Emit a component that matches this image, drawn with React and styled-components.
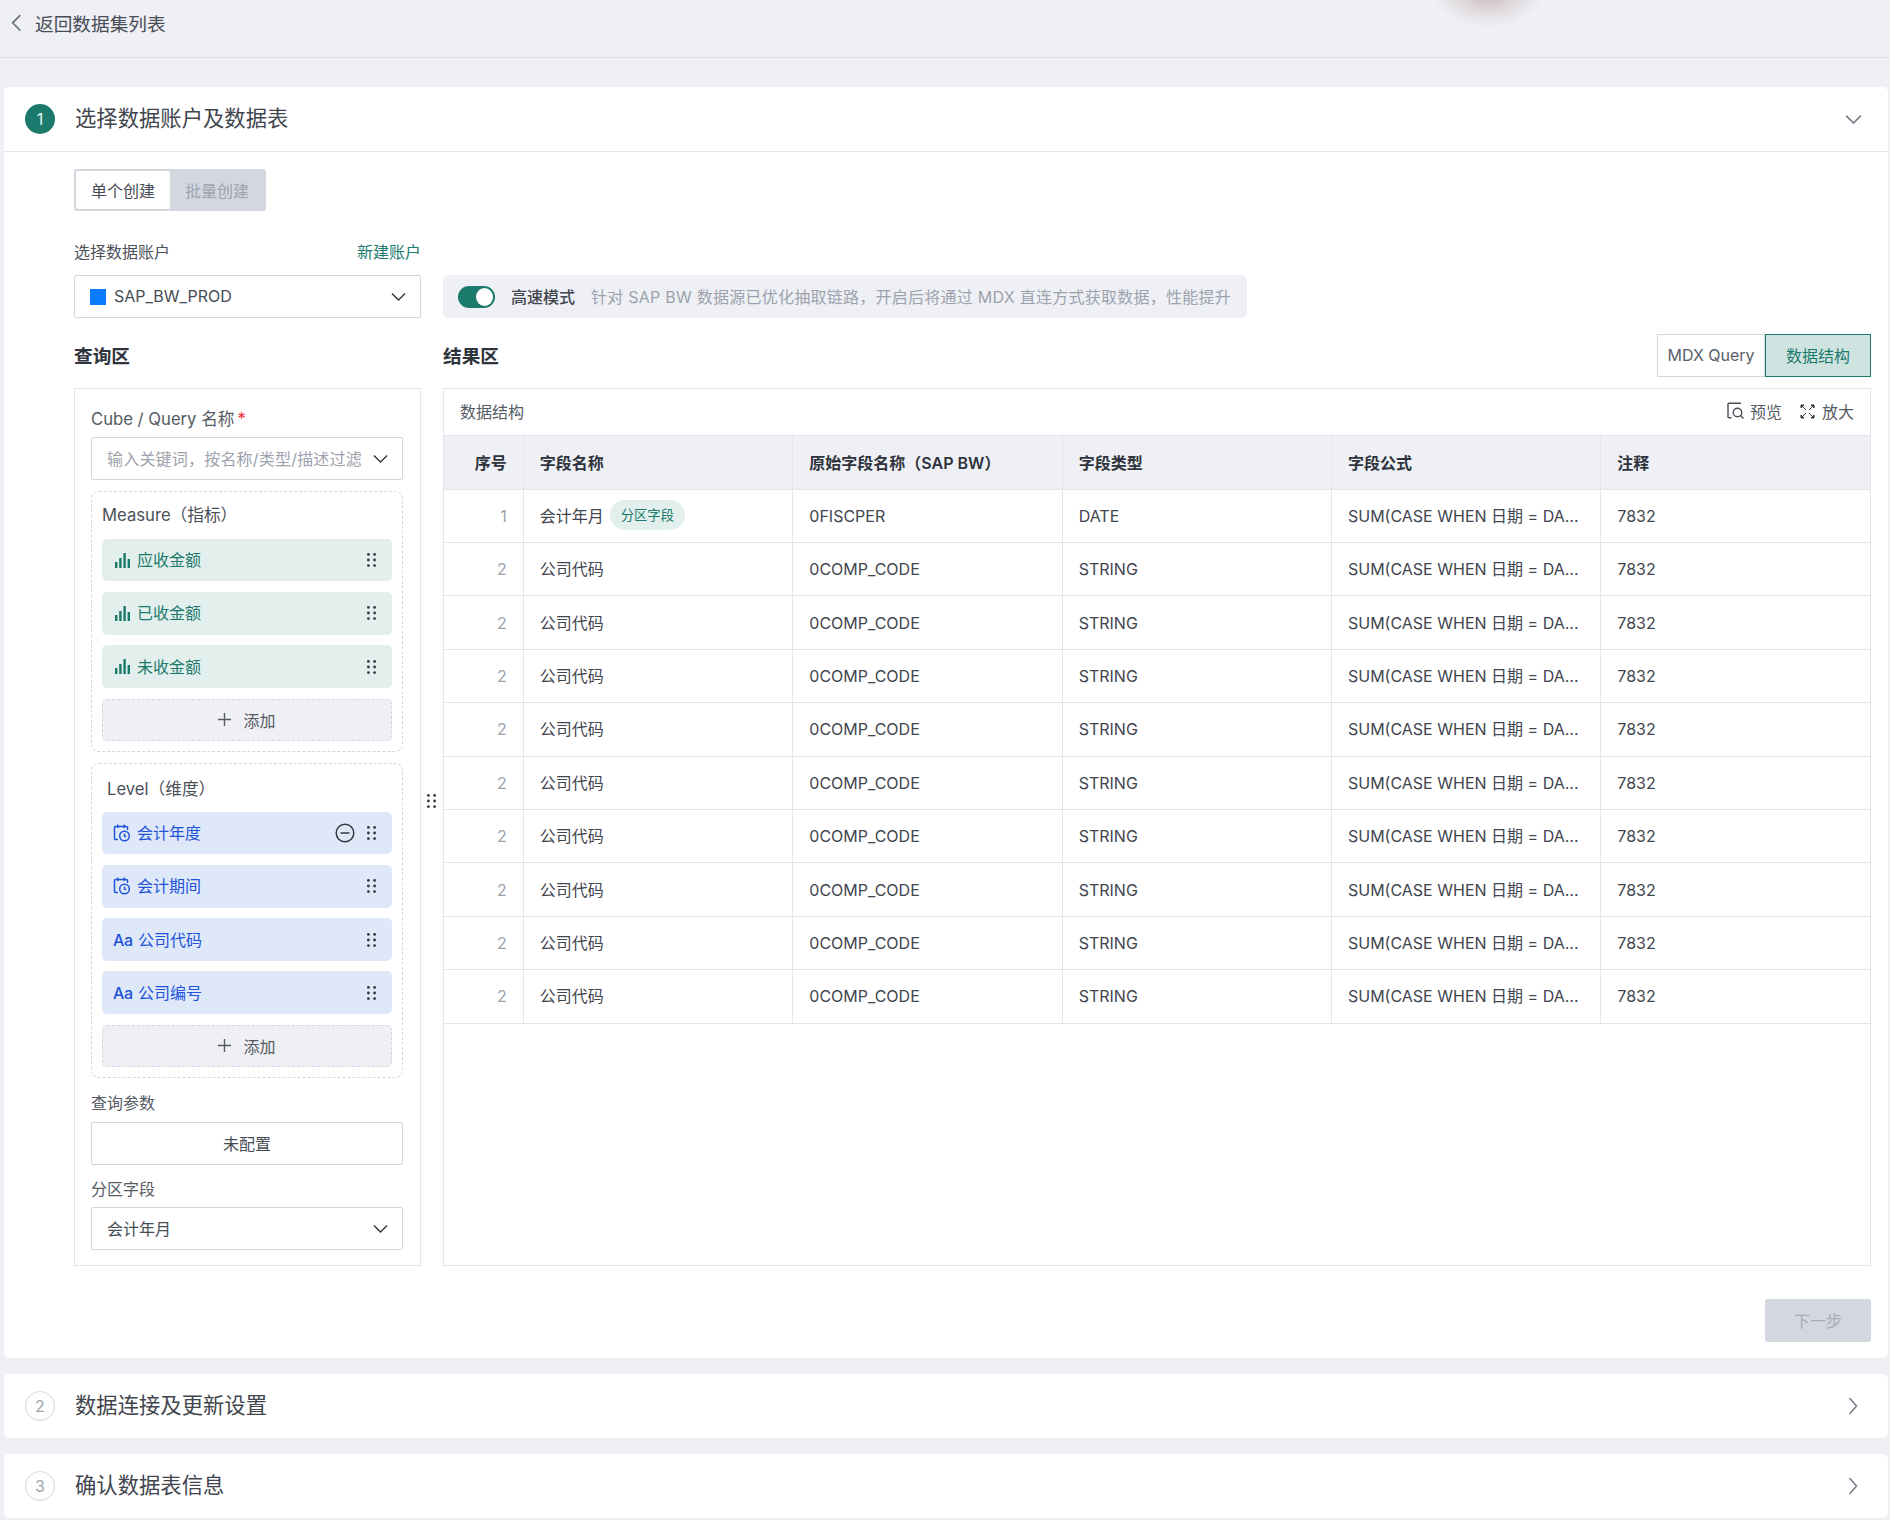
import React from "react";
import styled, { createGlobalStyle } from "styled-components";

const GREEN = "#1b7a6c";
const BLUE = "#2153d9";
const LINE = "#e3e5ec";
const FIELD = "#d3d7e0";
const GREY = "#9da2ad";
const TEXT = "#3a3f49";

const GlobalStyle = createGlobalStyle`
  html, body { margin: 0; padding: 0; background: #eff0f5; }
  body { font-family: Inter, "Noto Sans CJK SC", sans-serif; color: ${TEXT}; }
  * { box-sizing: border-box; }
`;

const Page = styled.div`
  width: 1890px;
  height: 1520px;
  overflow: hidden;
  position: relative;
`;
const Smudge = styled.div`
  position: absolute;
  left: 1430px;
  top: -50px;
  width: 116px;
  height: 78px;
  border-radius: 50%;
  background: radial-gradient(closest-side, rgba(186, 160, 155, 0.75), rgba(200, 185, 185, 0.3) 65%, rgba(239, 240, 245, 0));
`;
const TopBar = styled.div`
  height: 58px;
  padding: 0 0 12px 11px;
  display: flex;
  align-items: center;
  gap: 13px;
  font-size: 18.67px;
  color: #474c55;
  border-bottom: 1.33px solid #dcdee6;
`;
const Steps = styled.div`
  padding: 29px 2px 0 4px;
  display: flex;
  flex-direction: column;
  gap: 16px;
`;
const Card = styled.section`
  background: #fff;
  border-radius: 5px;
`;
const CardHead = styled.div`
  height: ${props => (props.$open ? "65.33px" : "64px")};
  padding: 0 ${props => (props.$open ? "26px" : "30px")} 0 21px;
  display: flex;
  align-items: center;
  border-bottom: ${props => (props.$open ? `1.33px solid ${LINE}` : "none")};
`;
const StepNo = styled.div`
  width: 30px;
  height: 30px;
  border-radius: 50%;
  display: flex;
  align-items: center;
  justify-content: center;
  font-size: 16px;
  background: ${props => (props.$active ? GREEN : "#fff")};
  color: ${props => (props.$active ? "#e8f3f1" : GREY)};
  border: ${props => (props.$active ? "none" : `1.33px solid ${FIELD}`)};
`;
const CardTitle = styled.h2`
  margin: 0 0 2px 20px;
  flex: 1;
  font-size: 21.33px;
  line-height: 32px;
  font-weight: 400;
  color: #41454e;
`;
const CardBody = styled.div`
  padding: 17px 17px 16px 70px;
`;
const Segment = styled.div`
  width: 192px;
  height: 42px;
  padding: 2px;
  display: flex;
  background: ${FIELD};
  border-radius: 3px;
`;
const SegmentItem = styled.div`
  width: 94px;
  padding-bottom: 1px;
  display: flex;
  align-items: center;
  justify-content: center;
  font-size: 16px;
  border-radius: 2px;
  background: ${props => (props.$active ? "#fff" : "transparent")};
  color: ${props => (props.$active ? "#474c55" : GREY)};
`;
const AccountGrid = styled.div`
  margin-top: 29px;
  display: grid;
  grid-template-columns: 347px 1fr;
  column-gap: 22px;
  row-gap: 11px;
  align-items: center;
`;
const LabelRow = styled.div`
  display: flex;
  justify-content: space-between;
  font-size: 16px;
  line-height: 24px;
  color: #4b5059;
`;
const NewLink = styled.a`
  color: ${GREEN};
`;
const Select = styled.div`
  height: 42.67px;
  padding: 0 14.5px 0 15px;
  display: flex;
  align-items: center;
  gap: 8px;
  border: 1.33px solid ${FIELD};
  border-radius: 2px;
  background: #fff;
  font-size: 16px;
  color: ${props => (props.$muted ? GREY : "#474c55")};
`;
const SelectText = styled.span`
  flex: 1;
  padding-bottom: 1px;
  white-space: nowrap;
  overflow: hidden;
  letter-spacing: ${props => (props.$muted ? "0.2px" : "0")};
`;
const Swatch = styled.i`
  width: 16px;
  height: 16px;
  background: #0b7cff;
`;
const Banner = styled.div`
  width: 804px;
  height: 42.67px;
  padding-left: 15px;
  display: flex;
  align-items: center;
  background: #eff0f5;
  border-radius: 5px;
  font-size: 16px;
`;
const Switch = styled.div`
  width: 37px;
  height: 22px;
  padding: 2px 2px 2px 0;
  display: flex;
  justify-content: flex-end;
  border-radius: 11px;
  background: ${GREEN};
  &::after {
    content: "";
    width: 17px;
    height: 18px;
    border-radius: 50%;
    background: #fff;
  }
`;
const BannerName = styled.span`
  margin-left: 16px;
  padding-bottom: 2px;
  font-weight: 500;
  color: #41454e;
`;
const BannerHint = styled.span`
  margin-left: 16px;
  padding-bottom: 2px;
  color: ${GREY};
  white-space: nowrap;
  letter-spacing: 0.25px;
`;
const Workspace = styled.div`
  margin-top: 16px;
  display: grid;
  grid-template-columns: 347px 22px 1fr;
`;
const Column = styled.div`
  display: flex;
  flex-direction: column;
`;
const Gutter = styled.div`
  padding: 458px 0 0 6px;
  color: #33383f;
`;
const ColumnHead = styled.div`
  height: 43px;
  margin-bottom: 11px;
  display: flex;
  align-items: center;
  justify-content: space-between;
`;
const Heading = styled.h3`
  margin: 0 0 2px;
  font-size: 18.67px;
  font-weight: 700;
  color: #2e333c;
`;
const ViewSwitch = styled.div`
  display: flex;
  height: 43px;
`;
const ViewTab = styled.div`
  width: ${props => (props.$active ? "106px" : "108px")};
  display: flex;
  align-items: center;
  justify-content: center;
  font-size: 16px;
  color: ${props => (props.$active ? GREEN : "#5b606a")};
  background: ${props => (props.$active ? "#cfe4e0" : "#fff")};
  border: ${props => (props.$active ? `1.33px solid ${GREEN}` : `1.33px solid ${FIELD}`)};
`;
const QueryPanel = styled.div`
  height: 878px;
  padding: 18px 17px 0 16px;
  border: 1.33px solid ${LINE};
`;
const FieldLabel = styled.div`
  font-size: ${props => props.$size || "16px"};
  line-height: 24px;
  margin: ${props => props.$margin || "0 0 6px"};
  color: #565b64;
`;
const Star = styled.span`
  margin-left: 3px;
  color: #f0353b;
`;
const Group = styled.div`
  margin-top: 11px;
  padding: 11px 10px 10px;
  display: flex;
  flex-direction: column;
  gap: 10.67px;
  border: 1.33px dashed ${FIELD};
  border-radius: 8px;
`;
const GroupTitle = styled.div`
  padding-left: ${props => props.$indent || 0};
  margin-top: ${props => props.$drop || 0};
  margin-bottom: ${props => (props.$drop ? "-0.5px" : "1.5px")};
  font-size: 16.67px;
  line-height: 24px;
  color: #4b5059;
`;
const Item = styled.div`
  height: 42.67px;
  padding: 0 16.5px 0 ${props => props.$pad || "13px"};
  display: flex;
  align-items: center;
  gap: 6px;
  border-radius: 5px;
  font-size: 16px;
  background: ${props => (props.$kind === "measure" ? "#e2efed" : "#dfe8f9")};
  color: ${props => (props.$kind === "measure" ? GREEN : BLUE)};
`;
const ItemName = styled.span`
  flex: 1;
  padding-bottom: 2px;
`;
const AaGlyph = styled.span`
  width: 19px;
  font-size: 16px;
  font-weight: 500;
  letter-spacing: -0.3px;
`;
const ItemTail = styled.span`
  display: flex;
  align-items: center;
  gap: 12px;
  color: #33383f;
`;
const AddButton = styled.div`
  height: 42.67px;
  padding-bottom: 1px;
  display: flex;
  align-items: center;
  justify-content: center;
  gap: 12px;
  border: 1.33px dashed ${FIELD};
  border-radius: 5px;
  background: #eff0f5;
  font-size: 16px;
  color: #555a63;
`;
const PlainButton = styled.div`
  height: 42.67px;
  padding-bottom: 1px;
  display: flex;
  align-items: center;
  justify-content: center;
  border: 1.33px solid ${FIELD};
  border-radius: 2px;
  font-size: 16px;
  color: #474c55;
`;
const ResultPanel = styled.div`
  height: 878px;
  border: 1.33px solid ${LINE};
`;
const ResultBar = styled.div`
  height: 46px;
  padding: 0 16px 1px;
  display: flex;
  align-items: center;
  justify-content: space-between;
  font-size: 16px;
  color: #565b64;
`;
const Actions = styled.div`
  display: flex;
  gap: 18px;
`;
const Action = styled.span`
  display: flex;
  align-items: center;
  gap: ${props => props.$gap || "7px"};
  color: #565b64;
`;
const TableRow = styled.div`
  display: grid;
  grid-template-columns: 79.67px 269.67px 269.33px 269.33px 269.33px 1fr;
  height: ${props => (props.$head ? "54.67px" : "53.4px")};
  background: ${props => (props.$head ? "#eff0f5" : "#fff")};
  border-bottom: 1.33px solid ${LINE};
  ${props => props.$head && `border-top: 1.33px solid ${LINE};`}
  font-weight: ${props => (props.$head ? 600 : 400)};
  color: ${props => (props.$head ? "#2e333c" : "#41454e")};
`;
const Cell = styled.div`
  padding: 0 16px ${props => (props.$cjk ? "2px" : "0")};
  display: flex;
  align-items: center;
  font-size: 16px;
  white-space: nowrap;
  overflow: hidden;
  justify-content: ${props => (props.$right ? "flex-end" : "flex-start")};
  color: ${props => (props.$muted ? GREY : "inherit")};
  border-right: ${props => (props.$last ? "none" : `1.33px solid ${LINE}`)};
`;
const Badge = styled.span`
  margin-left: 6px;
  height: 30px;
  padding: 0 11px;
  display: inline-flex;
  align-items: center;
  border-radius: 15px;
  background: #e2efed;
  color: ${GREEN};
  font-size: 13.33px;
  font-weight: 400;
`;
const Footer = styled.div`
  margin-top: 33px;
  display: flex;
  justify-content: flex-end;
`;
const NextButton = styled.div`
  width: 106px;
  height: 43px;
  padding-bottom: 1px;
  display: flex;
  align-items: center;
  justify-content: center;
  border-radius: 2px;
  background: ${FIELD};
  color: #a7abb5;
  font-size: 16px;
`;

const Chevron = ({ dir = "down", w = 15, color = "#33383f" }) => {
  const paths = {
    down: "M1 1.5l7 7 7-7",
    right: "M1.5 1l7 8-7 8",
    left: "M8.5 1l-7 7 7 7",
  };
  const box = { down: "0 0 16 10", right: "0 0 10 18", left: "0 0 10 16" };
  return (
    <svg width={w} viewBox={box[dir]} fill="none" stroke={color} strokeWidth="1.5" style={{ flexShrink: 0 }}>
      <path d={paths[dir]} />
    </svg>
  );
};

const Grip = () => (
  <svg width="9" height="14" viewBox="0 0 9 14" fill="currentColor">
    {[1.4, 7, 12.6].map(y =>
      [1.4, 7.6].map(x => <circle key={`${x}-${y}`} cx={x} cy={y} r="1.4" />)
    )}
  </svg>
);

const Bars = () => (
  <svg width="16" height="15" viewBox="0 0 16 15" fill={GREEN}>
    <rect x="0" y="9" width="2.4" height="6" />
    <rect x="4.2" y="5" width="2.4" height="10" />
    <rect x="8.4" y="0" width="2.4" height="15" />
    <rect x="12.6" y="6" width="2.4" height="9" />
  </svg>
);

const CalendarClock = () => (
  <svg width="18" height="18" viewBox="0 0 18 18" fill="none" stroke={BLUE} strokeWidth="1.5">
    <path d="M5 15.5H2.5a1 1 0 0 1-1-1V3.5a1 1 0 0 1 1-1h11a1 1 0 0 1 1 1V6" />
    <path d="M4.8 0.5v3.5M11.2 0.5v3.5" />
    <circle cx="11.5" cy="12" r="4.8" />
    <path d="M11.5 9.8V12l1.6 .8" />
  </svg>
);

const MinusCircle = () => (
  <svg width="20" height="20" viewBox="0 0 20 20" fill="none" stroke="currentColor" strokeWidth="1.5">
    <circle cx="10" cy="10" r="8.8" />
    <path d="M5.5 10h9" />
  </svg>
);

const Plus = () => (
  <svg width="13" height="13" viewBox="0 0 13 13" stroke="currentColor" strokeWidth="1.4">
    <path d="M6.5 0v13M0 6.5h13" />
  </svg>
);

const Preview = () => (
  <svg width="18" height="18" viewBox="0 0 18 18" fill="none" stroke="#4b5059" strokeWidth="1.4">
    <path d="M14 1.2H2a1 1 0 0 0-1 1v12.6a1 1 0 0 0 1 1h2.5" />
    <circle cx="10.5" cy="10.5" r="4.2" />
    <path d="M13.5 13.5l3 3" />
  </svg>
);

// four small arrows pointing out of the corners
const Expand = () => (
  <svg width="15" height="15" viewBox="0 0 15 15" fill="#33383f" stroke="#33383f" strokeWidth="1">
    <path d="M1 1h3L1 4zM2 2l4 4" />
    <path d="M14 1h-3l3 3zM13 2L9 6" />
    <path d="M1 14h3l-3-3zM2 13l4-4" />
    <path d="M14 14h-3l3-3zM13 13L9 9" />
  </svg>
);

const MEASURES = ["应收金额", "已收金额", "未收金额"];
const LEVELS = [
  { name: "会计年度", icon: "date", removable: true },
  { name: "会计期间", icon: "date" },
  { name: "公司代码", icon: "text" },
  { name: "公司编号", icon: "text" },
];
const COLUMNS = ["字段名称", "原始字段名称（SAP BW）", "字段类型", "字段公式", "注释"];
const FORMULA = "SUM(CASE WHEN 日期 = DA...";
const FIELDS = [
  { no: 1, name: "会计年月", partition: true, raw: "0FISCPER", type: "DATE" },
  ...Array.from({ length: 9 }, () => ({ no: 2, name: "公司代码", raw: "0COMP_CODE", type: "STRING" })),
];

export default function App() {
  return (
    <Page>
      <GlobalStyle />
      <Smudge />
      <TopBar>
        <Chevron dir="left" w={11} color="#6b707a" />
        返回数据集列表
      </TopBar>
      <Steps>
        <Card>
          <CardHead $open>
            <StepNo $active>1</StepNo>
            <CardTitle>选择数据账户及数据表</CardTitle>
            <Chevron w={17} color="#747985" />
          </CardHead>
          <CardBody>
            <Segment>
              <SegmentItem $active>单个创建</SegmentItem>
              <SegmentItem>批量创建</SegmentItem>
            </Segment>
            <AccountGrid>
              <LabelRow>
                选择数据账户
                <NewLink>新建账户</NewLink>
              </LabelRow>
              <div />
              <Select>
                <Swatch />
                <SelectText>SAP_BW_PROD</SelectText>
                <Chevron />
              </Select>
              <Banner>
                <Switch />
                <BannerName>高速模式</BannerName>
                <BannerHint>针对 SAP BW 数据源已优化抽取链路，开启后将通过 MDX 直连方式获取数据，性能提升</BannerHint>
              </Banner>
            </AccountGrid>
            <Workspace>
              <Column>
                <ColumnHead>
                  <Heading>查询区</Heading>
                </ColumnHead>
                <QueryPanel>
                  <FieldLabel $size="16.67px">
                    Cube / Query 名称<Star>*</Star>
                  </FieldLabel>
                  <Select $muted>
                    <SelectText $muted>输入关键词，按名称/类型/描述过滤</SelectText>
                    <Chevron />
                  </Select>
                  <Group>
                    <GroupTitle>Measure（指标）</GroupTitle>
                    {MEASURES.map(name => (
                      <Item key={name} $kind="measure">
                        <Bars />
                        <ItemName>{name}</ItemName>
                        <ItemTail><Grip /></ItemTail>
                      </Item>
                    ))}
                    <AddButton><Plus />添加</AddButton>
                  </Group>
                  <Group>
                    <GroupTitle $indent="5px" $drop="2px">Level（维度）</GroupTitle>
                    {LEVELS.map(level => (
                      <Item key={level.name} $kind="level" $pad="11px">
                        {level.icon === "date" ? <CalendarClock /> : <AaGlyph>Aa</AaGlyph>}
                        <ItemName>{level.name}</ItemName>
                        <ItemTail>
                          {level.removable && <MinusCircle />}
                          <Grip />
                        </ItemTail>
                      </Item>
                    ))}
                    <AddButton><Plus />添加</AddButton>
                  </Group>
                  <FieldLabel $margin="13px 0 7px">查询参数</FieldLabel>
                  <PlainButton>未配置</PlainButton>
                  <FieldLabel $margin="12px 0 6px">分区字段</FieldLabel>
                  <Select>
                    <SelectText>会计年月</SelectText>
                    <Chevron />
                  </Select>
                </QueryPanel>
              </Column>
              <Gutter><Grip /></Gutter>
              <Column>
                <ColumnHead>
                  <Heading>结果区</Heading>
                  <ViewSwitch>
                    <ViewTab>MDX Query</ViewTab>
                    <ViewTab $active>数据结构</ViewTab>
                  </ViewSwitch>
                </ColumnHead>
                <ResultPanel>
                  <ResultBar>
                    数据结构
                    <Actions>
                      <Action $gap="5px"><Preview />预览</Action>
                      <Action><Expand />放大</Action>
                    </Actions>
                  </ResultBar>
                  <TableRow $head>
                    <Cell $right>序号</Cell>
                    {COLUMNS.map((col, i) => (
                      <Cell key={col} $last={i === COLUMNS.length - 1}>{col}</Cell>
                    ))}
                  </TableRow>
                  {FIELDS.map((field, i) => (
                    <TableRow key={i}>
                      <Cell $right $muted>{field.no}</Cell>
                      <Cell $cjk>
                        {field.name}
                        {field.partition && <Badge>分区字段</Badge>}
                      </Cell>
                      <Cell>{field.raw}</Cell>
                      <Cell>{field.type}</Cell>
                      <Cell $cjk>{FORMULA}</Cell>
                      <Cell $last>7832</Cell>
                    </TableRow>
                  ))}
                </ResultPanel>
              </Column>
            </Workspace>
            <Footer>
              <NextButton>下一步</NextButton>
            </Footer>
          </CardBody>
        </Card>
        <Card>
          <CardHead>
            <StepNo>2</StepNo>
            <CardTitle>数据连接及更新设置</CardTitle>
            <Chevron dir="right" w={10} color="#747985" />
          </CardHead>
        </Card>
        <Card>
          <CardHead>
            <StepNo>3</StepNo>
            <CardTitle>确认数据表信息</CardTitle>
            <Chevron dir="right" w={10} color="#747985" />
          </CardHead>
        </Card>
      </Steps>
    </Page>
  );
}
